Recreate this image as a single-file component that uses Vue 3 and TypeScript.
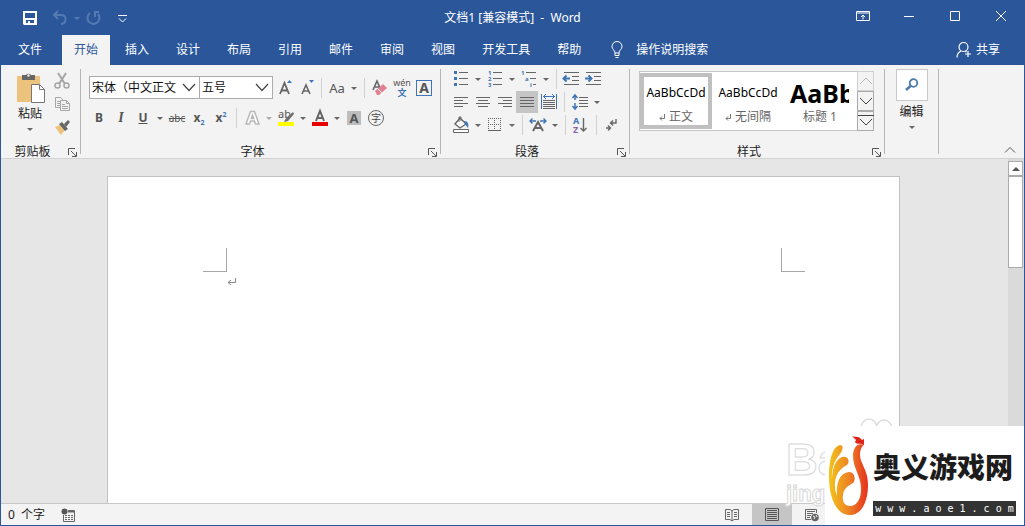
<script setup lang="ts">
import { h, ref } from 'vue'

const tabs: string[] = ['文件', '开始', '插入', '设计', '布局', '引用', '邮件', '审阅', '视图', '开发工具', '帮助']
const activeTab = ref('开始')
const fontName = ref('宋体（中文正文')
const fontSize = ref('五号')
const activeStyle = ref('正文')

interface StyleCard {
  name: string
  sample: string
  mark: boolean
  heading: boolean
}

const styleCards: StyleCard[] = [
  { name: '正文', sample: 'AaBbCcDd', mark: true, heading: false },
  { name: '无间隔', sample: 'AaBbCcDd', mark: true, heading: false },
  { name: '标题 1', sample: 'AaBb', mark: false, heading: true },
]

const Caret = () =>
  h('svg', { width: 12, height: 22, viewBox: '0 0 12 22', 'aria-hidden': 'true' }, [
    h('path', { d: 'M3 10h6L6 13z', fill: '#666' }),
  ])

const Launcher = () =>
  h('svg', { width: 9, height: 9, viewBox: '0 0 9 9', fill: 'none', stroke: '#555', 'aria-hidden': 'true' }, [
    h('path', { d: 'M.5 7V.5H7M3 3l5 5M8.500 4v4.500H4' }),
  ])
</script>

<template>
  <div class="window">
    <header class="titlebar">
      <div class="quick">
        <button aria-label="保存">
          <svg width="22" height="22" viewBox="0 0 22 22"><path fill="#fff" fill-rule="evenodd" d="M4 4h14v14H5l-1-1zM6 6v5h10V6zM7 13v3h2v-2h2v2h4v-3z" /></svg>
        </button>
        <button aria-label="撤消" class="dim undo">
          <svg width="22" height="22" viewBox="0 0 22 22" fill="none" stroke="#557ab3" stroke-width="2"><path d="M9 4L5 8l4 4M5 8h7c6 0 6 8 0 9" /></svg><svg width="12" height="22" viewBox="0 0 12 22"><path d="M3 10h6l-3 3z" fill="#557ab3" /></svg>
        </button>
        <button aria-label="重复" class="dim">
          <svg width="22" height="22" viewBox="0 0 22 22" fill="none" stroke="#557ab3" stroke-width="2"><path d="M7 6a6 6 0 1 0 8 1M11 5h5M12 4v6" /></svg>
        </button>
        <button aria-label="自定义快速访问工具栏" class="customize">
          <svg width="22" height="22" viewBox="0 0 22 22" fill="none" stroke="#fff"><path d="M7 8.500h9M8 11.500l3.500 3.500 3.500-3.500" /></svg>
        </button>
      </div>
      <div class="title">文档1 [兼容模式]&nbsp; -&nbsp; Word</div>
      <div class="window-buttons">
        <button aria-label="功能区显示选项">
          <svg width="14" height="12" viewBox="0 0 14 12" fill="none" stroke="#fff"><path d="M.5 1.500h13v9H.5zM.5 3h13M7 9.500V5M5 7l2-2 2 2" /></svg>
        </button>
        <button aria-label="最小化">
          <svg width="12" height="12" viewBox="0 0 12 12" stroke="#fff"><path d="M1 6.500h10" /></svg>
        </button>
        <button aria-label="最大化">
          <svg width="12" height="12" viewBox="0 0 12 12" fill="none" stroke="#fff"><path d="M1.500 1.500h9v9h-9z" /></svg>
        </button>
        <button aria-label="关闭">
          <svg width="12" height="12" viewBox="0 0 12 12" stroke="#fff"><path d="M1 1l10 10M11 1L1 11" /></svg>
        </button>
      </div>
    </header>

    <nav class="tabs">
      <button v-for="tab in tabs" :key="tab" class="tab" :class="{ active: tab === activeTab, file: tab === '文件' }" @click="activeTab = tab">{{ tab }}</button>
      <button class="tell-me">
        <svg width="14" height="20" viewBox="0 0 14 20" fill="none" stroke="#fff"><path d="M5 13c0-3-3-3.500-3-6.500a5 5 0 0 1 10 0c0 3-3 3.500-3 6.500zM5 13v2.500h4V13M5.500 17.500h3" /></svg>
        <span>操作说明搜索</span>
      </button>
      <button class="share">
        <svg width="16" height="18" viewBox="0 0 16 18" fill="none" stroke="#fff" stroke-width="1.200"><circle cx="7.500" cy="6" r="4.500" /><path d="M1 16.500c0-4 2-5.500 4-6.500M9 10l1.500 1M12 10v6M9 13h6" /></svg>
        <span>共享</span>
      </button>
    </nav>

    <section class="ribbon">
      <div class="group clipboard">
        <div class="group-body">
          <button class="paste">
            <svg width="30" height="32" viewBox="0 0 30 32">
              <path d="M2 4h23v26H2z" fill="#edc27c" /><path d="M7 3h4a3 3 0 0 1 5 0h4v5H7z" fill="#666" /><circle cx="13.500" cy="3.500" r="1.200" fill="#f3f3f3" />
              <path d="M16.500 12.500h8l5 5v13h-13z" fill="#fff" stroke="#777" /><path d="M24.500 12.500v5h5" fill="none" stroke="#777" />
            </svg>
            <span>粘贴</span>
            <Caret class="below" />
          </button>
          <div class="stack">
            <button aria-label="剪切">
              <svg width="22" height="22" viewBox="0 0 22 22" fill="none" stroke="#a5a5a5" stroke-width="1.500"><path d="M7 3l7 11M15 3L8 14" stroke-width="2" /><circle cx="6.500" cy="15.500" r="2.500" /><circle cx="15.500" cy="15.500" r="2.500" /></svg>
            </button>
            <button aria-label="复制">
              <svg width="22" height="22" viewBox="0 0 22 22" fill="#f3f3f3" stroke="#a5a5a5"><path d="M4.500 4.500h5l2 2v8h-7zM6 8.500h4M6 10.500h4M6 12.500h4" /><path d="M9.500 7.500h6l3 3v7h-9zM15.500 7.500v3h3M11 11.500h3M11 13.500h6M11 15.500h6" /></svg>
            </button>
            <button aria-label="格式刷">
              <svg width="22" height="22" viewBox="0 0 22 22"><path d="M4 11l5-2 5 5-4 5z" fill="#edc27c" /><path d="M8 8l3-2 6 7-3 2z" fill="#666" /><path d="M13 8l4-4 2 2-4 5z" fill="#666" /></svg>
            </button>
          </div>
        </div>
        <footer><span>剪贴板</span><button aria-label="剪贴板设置" class="launcher"><Launcher /></button></footer>
      </div>

      <div class="group font">
        <div class="group-body">
          <div class="row combos">
            <label class="combo family">
              <select v-model="fontName" aria-label="字体"><option>宋体（中文正文</option></select>
              <svg width="14" height="9" viewBox="0 0 14 9" fill="none" stroke="#444" stroke-width="1.200"><path d="M1 1l6 6.500L13 1" /></svg>
            </label>
            <label class="combo size">
              <select v-model="fontSize" aria-label="字号"><option>五号</option></select>
              <svg width="14" height="9" viewBox="0 0 14 9" fill="none" stroke="#444" stroke-width="1.200"><path d="M1 1l6 6.500L13 1" /></svg>
            </label>
            <button aria-label="增大字号">
              <svg width="22" height="22" viewBox="0 0 22 22"><path d="M7 17l4.500-11L16 17M8.500 13.500h6" fill="none" stroke="#666" stroke-width="1.800" /><path d="M14 6h5l-2.500-3z" fill="#3f75b5" /></svg>
            </button>
            <button aria-label="减小字号">
              <svg width="22" height="22" viewBox="0 0 22 22"><path d="M7 17l4-9 4 9M8 14h6" fill="none" stroke="#666" stroke-width="1.600" /><path d="M14 3h5l-2.500 3z" fill="#3f75b5" /></svg>
            </button>
            <i class="rule"></i>
            <button aria-label="更改大小写" class="case">Aa</button><button aria-label="更多大小写选项" class="drop"><Caret /></button>
            <i class="rule"></i>
            <button aria-label="清除所有格式">
              <svg width="22" height="22" viewBox="0 0 22 22"><path d="M4 13l4-9 3 7M5.500 10h5" fill="none" stroke="#666" stroke-width="1.600" /><path d="M6 14l8-7 4 4-8 7H8z" fill="#e58091" /><path d="M8.500 11.500l4.500 4.500" stroke="#f3f3f3" /></svg>
            </button>
            <button aria-label="拼音指南" class="pinyin"><span>wén</span><b>文</b></button>
            <button aria-label="字符边框"><span class="boxed">A</span></button>
          </div>
          <div class="row">
            <button aria-label="加粗" class="glyph bold">B</button>
            <button aria-label="倾斜" class="glyph italic">I</button>
            <button aria-label="下划线" class="glyph underline">U</button><button aria-label="下划线样式" class="drop"><Caret /></button>
            <button aria-label="删除线" class="strike">abc</button>
            <button aria-label="下标" class="script">x<sub>2</sub></button>
            <button aria-label="上标" class="script">x<sup>2</sup></button>
            <i class="rule"></i>
            <button aria-label="文本效果">
              <svg width="22" height="22" viewBox="0 0 22 22" fill="#fff" stroke="#b8b8b8" stroke-width="1.500"><path d="M5 17L9.500 4.500h4L18 17h-3.500l-1-3h-4l-1 3zM10.300 11.500h2.400L11.500 8z" /></svg>
            </button><button aria-label="更多文本效果" class="drop faded"><Caret /></button>
            <button aria-label="突出显示">
              <svg width="22" height="22" viewBox="0 0 22 22"><text x="3" y="11" font-size="11" fill="#555">ab</text><path d="M9 15l2-4 7-6 1 2-6 7z" fill="#707070" /><path d="M3 15h16v4H3z" fill="#ff0" /></svg>
            </button><button aria-label="突出显示颜色" class="drop"><Caret /></button>
            <button aria-label="字体颜色">
              <svg width="22" height="22" viewBox="0 0 22 22"><path d="M7 14l4-10 4 10M8 11h6" fill="none" stroke="#666" stroke-width="2" /><path d="M3 15h16v4H3z" fill="#e60000" /></svg>
            </button><button aria-label="更多字体颜色" class="drop"><Caret /></button>
            <button aria-label="字符底纹"><span class="shaded">A</span></button>
            <button aria-label="带圈字符"><span class="ringed">字</span></button>
          </div>
        </div>
        <footer><span>字体</span><button aria-label="字体设置" class="launcher"><Launcher /></button></footer>
      </div>

      <div class="group paragraph">
        <div class="group-body">
          <div class="row">
            <button aria-label="项目符号">
              <svg width="22" height="22" viewBox="0 0 22 22"><path d="M4 3h3v3H4zM4 9h3v3H4zM4 15h3v3H4z" fill="#3f75b5" /><path d="M9 4.500h9M9 10.500h9M9 16.500h9" stroke="#666" /></svg>
            </button><button aria-label="更多项目符号" class="drop"><Caret /></button>
            <button aria-label="编号">
              <svg width="22" height="22" viewBox="0 0 22 22"><g font-size="6" font-weight="700" fill="#3f75b5"><text x="4" y="7">1</text><text x="4" y="13">2</text><text x="4" y="19">3</text></g><path d="M9 4.500h9M9 10.500h9M9 16.500h9" stroke="#666" /></svg>
            </button><button aria-label="更多编号" class="drop"><Caret /></button>
            <button aria-label="多级列表">
              <svg width="22" height="22" viewBox="0 0 22 22"><g font-size="6" font-weight="700" fill="#3f75b5"><text x="3" y="7">1</text><text x="7" y="13">a</text><text x="12" y="19">i</text></g><path d="M8 4.500h10M12 10.500h6M15 16.500h3" stroke="#666" /></svg>
            </button><button aria-label="更多多级列表" class="drop"><Caret /></button>
            <i class="rule"></i>
            <button aria-label="减少缩进量">
              <svg width="22" height="22" viewBox="0 0 22 22" fill="none" stroke="#666"><path d="M3 4.500h15M11 8.500h7M11 12.500h7M3 16.500h15" /><path d="M2 10.500h7M5.500 7.500l-3 3 3 3" stroke="#3f75b5" stroke-width="2" /></svg>
            </button>
            <button aria-label="增加缩进量">
              <svg width="22" height="22" viewBox="0 0 22 22" fill="none" stroke="#666"><path d="M3 4.500h15M11 8.500h7M11 12.500h7M3 16.500h15" /><path d="M2 10.500h7M5.500 7.500l3 3-3 3" stroke="#3f75b5" stroke-width="2" /></svg>
            </button>
          </div>
          <div class="row">
            <button aria-label="左对齐"><svg width="22" height="22" viewBox="0 0 22 22" stroke="#666"><path d="M4 6.500h14M4 9.500h9M4 12.500h14M4 15.500h9" /></svg></button>
            <button aria-label="居中"><svg width="22" height="22" viewBox="0 0 22 22" stroke="#666"><path d="M4 6.500h14M6 9.500h10M4 12.500h14M6 15.500h10" /></svg></button>
            <button aria-label="右对齐"><svg width="22" height="22" viewBox="0 0 22 22" stroke="#666"><path d="M4 6.500h14M9 9.500h9M4 12.500h14M9 15.500h9" /></svg></button>
            <button aria-label="两端对齐" class="pressed"><svg width="22" height="22" viewBox="0 0 22 22" stroke="#666"><path d="M4 6.500h14M4 9.500h14M4 12.500h14M4 15.500h14" /></svg></button>
            <button aria-label="分散对齐">
              <svg width="22" height="22" viewBox="0 0 22 22" fill="none" stroke="#666"><path d="M5 9.500h12M5 11.500h12M5 13.500h12M5 15.500h12M5 17.500h12" /><path d="M3.500 3v15M18.500 3v15M5 5.500h12M8 3L5.500 5.500 8 8M14 3l2.500 2.500L14 8" stroke="#3f75b5" /></svg>
            </button>
            <i class="rule"></i>
            <button aria-label="行和段落间距">
              <svg width="22" height="22" viewBox="0 0 22 22" fill="none" stroke="#666"><path d="M10 6.500h9M10 9.500h9M10 12.500h9M10 15.500h9" /><path d="M6 4v5M6 12v6M3.500 7L6 4l2.500 3M3.500 15L6 18l2.500-3" stroke="#3f75b5" stroke-width="1.500" /></svg>
            </button><button aria-label="更多行距" class="drop"><Caret /></button>
          </div>
          <div class="row">
            <button aria-label="底纹">
              <svg width="22" height="22" viewBox="0 0 22 22" fill="none" stroke="#666"><path d="M5 10l5-6 6 6-6 4z" fill="#fff" stroke-width="1.400" /><path d="M9 8V3h2v4" /><path d="M14 7c4 0 5 3 4 7l-3-4z" fill="#3f75b5" stroke="none" /><path d="M3.500 15.500h15v3h-15z" fill="#fff" /></svg>
            </button><button aria-label="底纹颜色" class="drop"><Caret /></button>
            <button aria-label="边框">
              <svg width="22" height="22" viewBox="0 0 22 22" fill="none" stroke="#666"><path d="M4 4.500h13M4.500 4v13M16.500 4v13M10.500 4v13M4 10.500h13" stroke-dasharray="1 1" /><path d="M4 16.500h13" /></svg>
            </button><button aria-label="更多边框" class="drop"><Caret /></button>
            <i class="rule"></i>
            <button aria-label="中文版式">
              <svg width="22" height="22" viewBox="0 0 22 22" fill="none"><path d="M6 17l5-9 5 9M7.500 14h7" stroke="#666" stroke-width="2" /><path d="M3 7h6M5.500 4.500L3 7l2.500 2.500M13 7h6M16.500 4.500L19 7l-2.500 2.500" stroke="#3f75b5" stroke-width="1.400" /></svg>
            </button><button aria-label="更多中文版式" class="drop"><Caret /></button>
            <i class="rule"></i>
            <button aria-label="排序">
              <svg width="22" height="22" viewBox="0 0 22 22"><text x="3" y="10" font-size="9" font-weight="700" fill="#3f75b5">A</text><text x="3" y="19" font-size="9" font-weight="700" fill="#8a5fa8">Z</text><path d="M13.500 4v13M10.500 14l3 3 3-3" fill="none" stroke="#666" stroke-width="1.400" /></svg>
            </button>
            <i class="rule"></i>
            <button aria-label="显示编辑标记">
              <svg width="22" height="22" viewBox="0 0 22 22" fill="none" stroke="#666" stroke-width="1.400"><path d="M15 5v4h-5M12 6.500L9.500 9l2.500 2.500M5 14h4M7 11.500L9.500 14 7 16.500" /></svg>
            </button>
          </div>
        </div>
        <footer><span>段落</span><button aria-label="段落设置" class="launcher"><Launcher /></button></footer>
      </div>

      <div class="group styles">
        <div class="group-body">
          <div class="gallery">
            <button v-for="card in styleCards" :key="card.name" class="card" :class="{ selected: card.name === activeStyle, heading: card.heading }" @click="activeStyle = card.name">
              <span class="sample">{{ card.sample }}</span>
              <span class="name">
                <svg v-if="card.mark" width="7" height="8" viewBox="0 0 7 8" fill="none" stroke="#777"><path d="M5.500 1v4.500H1M3 3.500l-2 2 2 2" /></svg>{{ card.name }}
              </span>
            </button>
          </div>
          <div class="gallery-scroll">
            <button aria-label="上一行" class="off"><svg width="16" height="10" viewBox="0 0 16 10" fill="none" stroke="#bbb"><path d="M2 8l6-6 6 6" /></svg></button>
            <button aria-label="下一行"><svg width="16" height="10" viewBox="0 0 16 10" fill="none" stroke="#444"><path d="M2 2l6 6 6-6" /></svg></button>
            <button aria-label="其他样式"><svg width="16" height="14" viewBox="0 0 16 14" fill="none" stroke="#444"><path d="M0 1.500h16M2 5l6 6 6-6" /></svg></button>
          </div>
        </div>
        <footer><span>样式</span><button aria-label="样式设置" class="launcher"><Launcher /></button></footer>
      </div>

      <div class="group editing">
        <button class="edit">
          <span class="edit-icon"><svg width="16" height="16" viewBox="0 0 16 16" fill="none" stroke="#4a7aab"><circle cx="9.500" cy="6" r="3.800" stroke-width="1.800" /><path d="M6.500 9L2 13" stroke-width="2.400" /></svg></span>
          <span>编辑</span>
          <Caret class="below" />
        </button>
      </div>

      <button aria-label="折叠功能区" class="collapse"><svg width="12" height="8" viewBox="0 0 12 8" fill="none" stroke="#555"><path d="M1 6.500L6 1.500l5 5" /></svg></button>
    </section>

    <main class="workspace">
      <div class="canvas">
        <article class="page">
          <div class="margins"><i class="corner left"></i><i class="corner right"></i></div>
          <p class="text">
            <svg width="10" height="10" viewBox="0 0 10 10" fill="none" stroke="#888"><path d="M8.500 1v4.500H1M4 3L1 5.500 4 8" /></svg>
          </p>
        </article>
      </div>
      <div class="scrollbar">
        <button aria-label="向上滚动"><svg width="8" height="5" viewBox="0 0 8 5"><path d="M0 5l4-4 4 4z" fill="#555" /></svg></button>
        <div class="thumb"></div>
      </div>
    </main>

    <footer class="status">
      <span>0&nbsp; 个字</span>
      <button aria-label="宏录制" class="macro">
        <svg width="14" height="14" viewBox="0 0 14 14" fill="none" stroke="#666"><path d="M7 2.500h6.500v11h-11V7" /><path d="M7 3.500h6" stroke-width="2" /><circle cx="3.500" cy="3.500" r="3" fill="#555" stroke="none" /><path d="M4 7.500h8M4 9.500h8M4 11.500h8" stroke-dasharray="2 1" /></svg>
      </button>
      <div class="views">
        <button aria-label="阅读视图"><svg width="14" height="14" viewBox="0 0 14 14" fill="none" stroke="#666"><path d="M7 3L5 1.500H.5v10H5L7 13l2-1.500h4.500v-10H9zM7 3v10M2 4.500h3M2 6.500h3M2 8.500h3M9 4.500h3M9 6.500h3M9 8.500h3" /></svg></button>
        <button aria-label="页面视图" class="pressed"><svg width="14" height="14" viewBox="0 0 14 14" fill="none" stroke="#555"><path d="M.5.5h13v12H.5zM2 2.500h10M2 4.500h10M2 6.500h10M2 8.500h10M2 10.500h10" /></svg></button>
        <button aria-label="Web 版式视图"><svg width="14" height="14" viewBox="0 0 14 14" fill="none" stroke="#666"><path d="M6 11.500H.5v-10h11V5M2 3.500h8M2 5.500h6M2 7.500h4M2 9.500h3" /><circle cx="10" cy="9.500" r="3.800" fill="#666" stroke="none" /><path d="M8 8l2 1-1 2M11 7l1 2" stroke="#f3f3f3" /></svg></button>
      </div>
    </footer>

    <div class="watermark">
      <svg class="paw" width="36" height="20" viewBox="0 0 36 20" fill="#fff" stroke="#ddd" stroke-width="1.500"><ellipse cx="11" cy="10" rx="8" ry="9" /><ellipse cx="26" cy="11" rx="8" ry="9" /></svg>
      <span class="bai">Bai</span>
      <span class="jing">jingyan</span>
    </div>

    <aside class="site-logo">
      <svg width="42" height="82" viewBox="0 0 42 82" aria-hidden="true">
        <defs>
          <linearGradient id="flame" x1="0" y1="0" x2="1" y2="0"><stop offset="0" stop-color="#f2c41c" /><stop offset=".5" stop-color="#ee8424" /><stop offset="1" stop-color="#e5301f" /></linearGradient>
        </defs>
        <path fill="url(#flame)" d="M13 10C5 12 2 26 2 42c0 20 7 38 21 38 12 0 18-14 18-30 0-15-8-22-8-30 0-5 2-9 4-10-6-3-11 2-11 11 0 12 8 20 8 33 0 10-4 17-11 17-6 0-8-5-7-11 1-7 5-9 10-12 3-3 2-11-4-11-10 1-13 12-12 24C5 48 9 35 20 30c4-4 0-11-7-7C7 27 5 37 5 45 4 31 9 24 13 19c3-4 4-9 0-9z" />
        <path fill="#e2231a" d="M25 1c4 2 6-1 10 4l2-1v6c-3-2-7 0-9-3l1-2z" />
      </svg>
      <div class="site-text">
        <strong>奥义游戏网</strong>
        <span>w w w . a o e 1 . c o m</span>
      </div>
    </aside>
  </div>
</template>

<style>
body {
  margin: 0;
}
</style>

<style scoped>
* {
  box-sizing: border-box;
}
.window {
  position: relative;
  display: flex;
  flex-direction: column;
  height: 100vh;
  overflow: hidden;
  border: 1px solid #2b579a;
  border-top: 0;
  background: #f3f3f3;
  color: #222;
  font: 12px/16px "Noto Sans", "Noto Sans CJK SC", sans-serif;
}
button {
  display: flex;
  align-items: center;
  justify-content: center;
  padding: 0;
  border: 0;
  background: none;
  color: inherit;
  font: inherit;
  white-space: nowrap;
}
svg {
  display: block;
  flex: none;
}

.titlebar {
  display: grid;
  grid-template-columns: 1fr auto 1fr;
  height: 35px;
  flex: none;
  background: #2b579a;
  color: #fff;
}
.quick {
  display: flex;
  align-items: center;
  padding-left: 18px;
}
.undo {
  margin-left: 8px;
}
.customize {
  margin-left: 6px;
}
.title {
  align-self: center;
}
.window-buttons {
  display: flex;
  justify-content: flex-end;
}
.window-buttons button {
  width: 46px;
  height: 32px;
}

.tabs {
  display: flex;
  gap: 3px;
  height: 30px;
  flex: none;
  background: #2b579a;
  color: #fff;
}
.tab {
  padding: 0 12px;
}
.file {
  width: 58px;
}
.active {
  background: #f3f3f3;
  color: #2b579a;
}
.tell-me {
  gap: 12px;
  margin-left: 14px;
}
.share {
  gap: 4px;
  margin-left: auto;
  padding-right: 24px;
}

.ribbon {
  display: flex;
  flex: none;
  height: 94px;
  padding: 4px 0;
  border-bottom: 1px solid #d2d2d2;
}
.group {
  display: flex;
  flex-direction: column;
  border-right: 1px solid #b5b5b5;
}
.group-body {
  flex: 1;
  min-height: 0;
}
.group footer {
  display: grid;
  grid-template-columns: 1fr 16px;
  align-items: center;
  flex: none;
  height: 10px;
}
.group footer span {
  text-align: center;
}
.below {
  margin: -4px 0;
}
.row {
  display: flex;
  align-items: center;
}
.row button {
  width: 22px;
  height: 22px;
}
.row .drop {
  width: 12px;
}
.faded {
  opacity: 0.5;
}
.rule {
  width: 1px;
  height: 20px;
  margin: 0 4px;
  background: #d0d0d0;
}
.row .pressed,
.views .pressed {
  background: #c5c5c5;
}

.clipboard {
  width: 80px;
}
.clipboard .group-body {
  display: flex;
  padding-left: 14px;
}
.paste {
  flex-direction: column;
  justify-content: flex-start;
  width: 30px;
  padding-top: 3px;
}
.paste span {
  margin-top: 2px;
}
.stack {
  display: grid;
  align-content: start;
  grid-auto-rows: 23px;
  margin-left: 6px;
}

.font {
  width: 360px;
}
.font .group-body {
  display: grid;
  align-content: start;
  gap: 8px;
  padding: 7px 0 0 7px;
}
.combos {
  padding-left: 1px;
}
.combo {
  display: grid;
  align-items: center;
  height: 23px;
  border: 1px solid #ababab;
  background: #fff;
}
.combo select,
.combo svg {
  grid-area: 1 / 1;
}
.combo svg {
  justify-self: end;
  margin-right: 3px;
  pointer-events: none;
}
.combo select {
  width: 100%;
  min-width: 0;
  padding: 0 0 0 2px;
  border: 0;
  appearance: none;
  background: none;
  color: #111;
  font: inherit;
}
.family {
  width: 111px;
}
.size {
  width: 73px;
  border-left: 0;
}
.row .case {
  color: #555;
  font-size: 13px;
}
.row .pinyin {
  flex-direction: column;
  color: #555;
  font-size: 9px;
  line-height: 10px;
}
.pinyin b {
  color: #3f75b5;
}
.boxed {
  width: 16px;
  border: 1px solid #3f75b5;
  color: #555;
  font-weight: 700;
  font-size: 14px;
  line-height: 14px;
}
.glyph {
  color: #555;
  font-weight: 700;
}
.italic {
  font-family: "Liberation Serif", serif;
  font-style: italic;
  font-size: 14px;
}
.underline {
  text-decoration: underline;
}
.strike {
  color: #555;
  font-size: 10px;
  text-decoration: line-through;
}
.script {
  color: #555;
  font-weight: 700;
}
.script sub,
.script sup {
  color: #3f75b5;
  font-size: 7px;
  line-height: 8px;
}
.script sub {
  align-self: flex-end;
  margin-bottom: 2px;
}
.script sup {
  align-self: flex-start;
  margin-top: 4px;
}
.shaded {
  width: 14px;
  background: #bdbdbd;
  color: #555;
  font-weight: 700;
  font-size: 13px;
  line-height: 14px;
}
.ringed {
  width: 16px;
  border: 1px solid #666;
  border-radius: 50%;
  color: #444;
  font-size: 10px;
  line-height: 14px;
}

.paragraph {
  width: 189px;
}
.paragraph .group-body {
  display: grid;
  align-content: start;
  grid-auto-rows: 20px;
  gap: 3px;
  padding-left: 9px;
}

.styles {
  width: 255px;
}
.styles .group-body {
  display: flex;
  align-items: flex-start;
  padding: 2px 10px 0 9px;
}
.gallery {
  display: flex;
  flex: 1;
  height: 60px;
  min-width: 0;
  overflow: hidden;
  padding: 1px 0;
  border: 1px solid #c6c6c6;
  border-right: 0;
  background: #fff;
}
.card {
  flex-direction: column;
  flex: none;
  width: 72px;
  border: 4px solid transparent;
  color: #000;
}
.card.selected {
  border-color: #c0c0c0;
}
.card .sample {
  height: 32px;
  line-height: 32px;
}
.card .name {
  display: flex;
  align-items: center;
  gap: 3px;
  color: #666;
}
.heading .sample {
  align-self: flex-start;
  width: 61px;
  padding-left: 2px;
  overflow: hidden;
  font-weight: 700;
  font-size: 25px;
  text-align: left;
}
.gallery-scroll {
  display: grid;
  grid-auto-rows: 20px;
}
.gallery-scroll button {
  width: 17px;
  border: 1px solid #ababab;
}
.gallery-scroll .off {
  border-color: #d0d0d0;
}

.editing {
  width: 54px;
}
.edit {
  flex-direction: column;
}
.edit-icon {
  display: grid;
  place-items: center;
  width: 32px;
  height: 32px;
  margin-bottom: 3px;
  border: 1px solid #c9c9c9;
  background: #fff;
}
.collapse {
  align-self: flex-end;
  margin: 0 8px 0 auto;
}

.workspace {
  display: flex;
  flex: 1;
  min-height: 0;
  background: #e6e6e6;
}
.canvas {
  display: flex;
  flex: 1;
  justify-content: center;
  padding: 17px 18px 0 16px;
}
.page {
  width: 100%;
  max-width: 793px;
  padding: 71px 94px 0 95px;
  border: 1px solid #c2c2c2;
  border-bottom: 0;
  background: #fff;
}
.margins {
  display: flex;
  justify-content: space-between;
}
.corner {
  width: 24px;
  height: 24px;
  border-bottom: 1px solid #a8a8a8;
}
.corner.left {
  border-right: 1px solid #a8a8a8;
}
.corner.right {
  border-left: 1px solid #a8a8a8;
}
.text {
  margin: 5px 24px;
}
.scrollbar {
  width: 16px;
  padding: 2px 1px 0 0;
  background: #dadada;
}
.scrollbar button {
  width: 100%;
  height: 15px;
  border: 1px solid #ababab;
  background: #fff;
}
.thumb {
  height: 92px;
  border: 1px solid #ababab;
  background: #fff;
}

.status {
  display: flex;
  align-items: center;
  flex: none;
  height: 22px;
  padding-left: 7px;
  border-top: 1px solid #c8c8c8;
}
.macro {
  margin-left: 16px;
}
.views {
  display: flex;
  align-self: stretch;
  margin: 0 192px 0 auto;
}
.views button {
  width: 40px;
}

.watermark {
  position: absolute;
  right: 130px;
  bottom: 19px;
  display: grid;
  width: 108px;
  color: #fff;
  font-family: "Liberation Sans", sans-serif;
  font-weight: 700;
  -webkit-text-stroke: 1px #d8d8d8;
}
.paw {
  justify-self: end;
}
.bai {
  font-size: 44px;
  line-height: 44px;
}
.jing {
  font-size: 22px;
  line-height: 24px;
}
.site-logo {
  position: absolute;
  right: -1px;
  bottom: -1px;
  display: flex;
  width: 200px;
  height: 100px;
  padding: 9px 9px 0 2px;
  background: #fff;
}
.site-text {
  display: flex;
  flex: 1;
  flex-direction: column;
  justify-content: space-between;
  margin: 6px 0 0 4px;
  height: 75px;
}
.site-text strong {
  color: #1c1c1c;
  font-family: "Noto Sans CJK SC", sans-serif;
  font-weight: 900;
  font-size: 28px;
  line-height: 50px;
}
.site-text span {
  background: #333;
  color: #fff;
  font: 10px/15px "DejaVu Sans Mono", monospace;
  text-align: center;
  white-space: nowrap;
}
</style>
